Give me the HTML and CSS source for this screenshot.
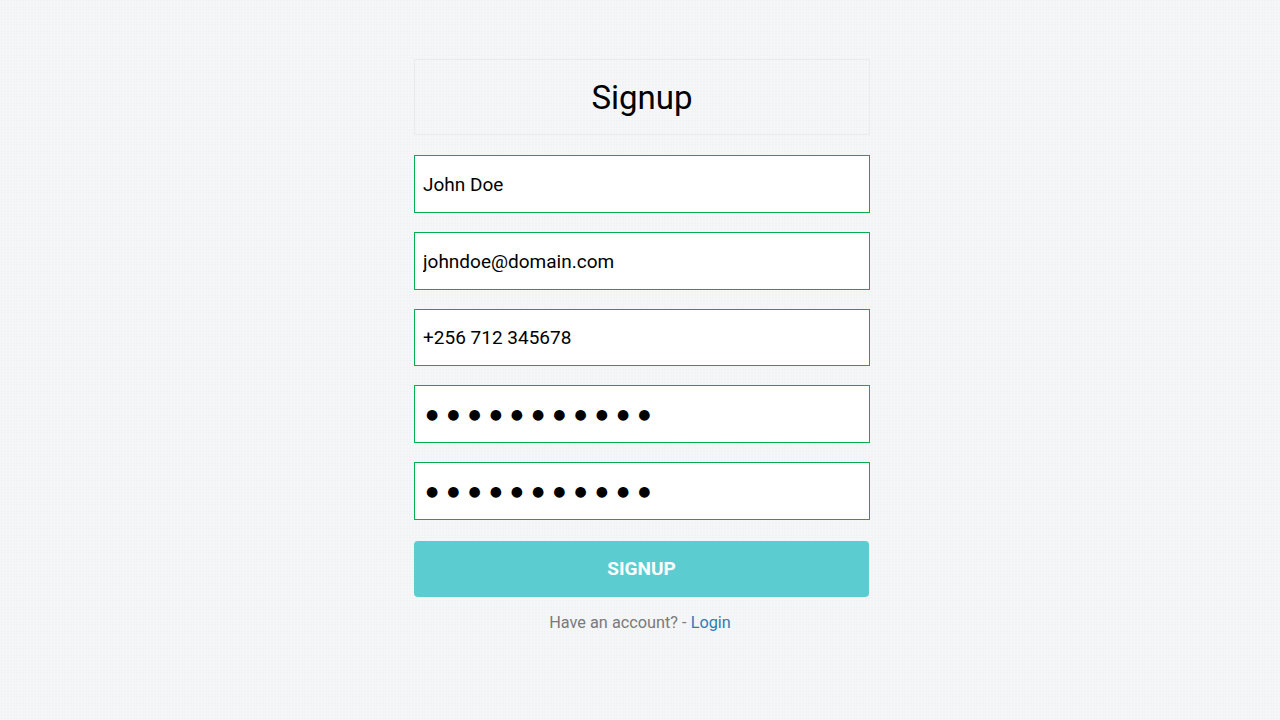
FILE: index.html
```html
<!DOCTYPE html>
<html lang="en">
<head>
<meta charset="utf-8">
<title>Signup</title>
<link rel="stylesheet" href="styles.css">
</head>
<body>
<main class="wrap">
  <form class="card">
    <div class="head"><h1 class="title">Signup</h1></div>
    <input class="field" type="text" value="John Doe">
    <input class="field" type="email" value="johndoe@domain.com">
    <input class="field" type="tel" value="+256 712 345678">
    <input class="field pw" type="text" value="●●●●●●●●●●●" aria-label="Password">
    <input class="field pw last" type="text" value="●●●●●●●●●●●" aria-label="Confirm password">
    <button class="btn" type="button">SIGNUP</button>
    <p class="foot">Have an account? - <a class="link" href="#">Login</a></p>
  </form>
</main>
</body>
</html>
```
FILE: styles.css
```css
html, body {
  margin: 0;
  padding: 0;
}
body {
  background-color: #f2f3f5;
  background-image:
    linear-gradient(90deg, rgba(255,255,255,0.25) 1px, transparent 1px),
    linear-gradient(0deg, rgba(255,255,255,0.25) 1px, transparent 1px);
  background-size: 3px 3px;
  font-family: Roboto, "Liberation Sans", sans-serif;
  min-height: 720px;
}
.wrap {
  display: flex;
  justify-content: center;
  padding: 59px 0 0 4px;
}
.card {
  width: 456px;
  display: flex;
  flex-direction: column;
}
.head {
  height: 76px;
  box-sizing: border-box;
  border: 1px solid #eaebed;
  display: flex;
  align-items: center;
  justify-content: center;
  margin-bottom: 20px;
}
.title {
  margin: 0;
  font-weight: 400;
  font-size: 33px;
  color: #000;
}
.field {
  height: 57.75px;
  box-sizing: border-box;
  border: 1px solid #00b050;
  background: #fff;
  padding: 1px 8px 0;
  margin: 0 0 19px 0;
  font-family: Roboto, "Liberation Sans", sans-serif;
  font-size: 19px;
  color: #000;
  outline: none;
  border-radius: 0;
}
.last {
  margin-bottom: 21px;
}
.pw {
  font-family: "DejaVu Sans", sans-serif;
  font-size: 14px;
  letter-spacing: 9px;
  padding: 0 8px 0 11px;
}
.btn {
  height: 56px;
  width: 455px;
  border: none;
  border-radius: 4px;
  background: #5bcdd1;
  color: #fff;
  font-family: Roboto, "Liberation Sans", sans-serif;
  font-weight: 700;
  font-size: 19px;
  cursor: pointer;
}
.foot {
  margin: 16px 0 0;
  padding-right: 4px;
  text-align: center;
  font-size: 16.3px;
  color: #7a7a7a;
}
.link {
  color: #337ab7;
  text-decoration: none;
}
```
